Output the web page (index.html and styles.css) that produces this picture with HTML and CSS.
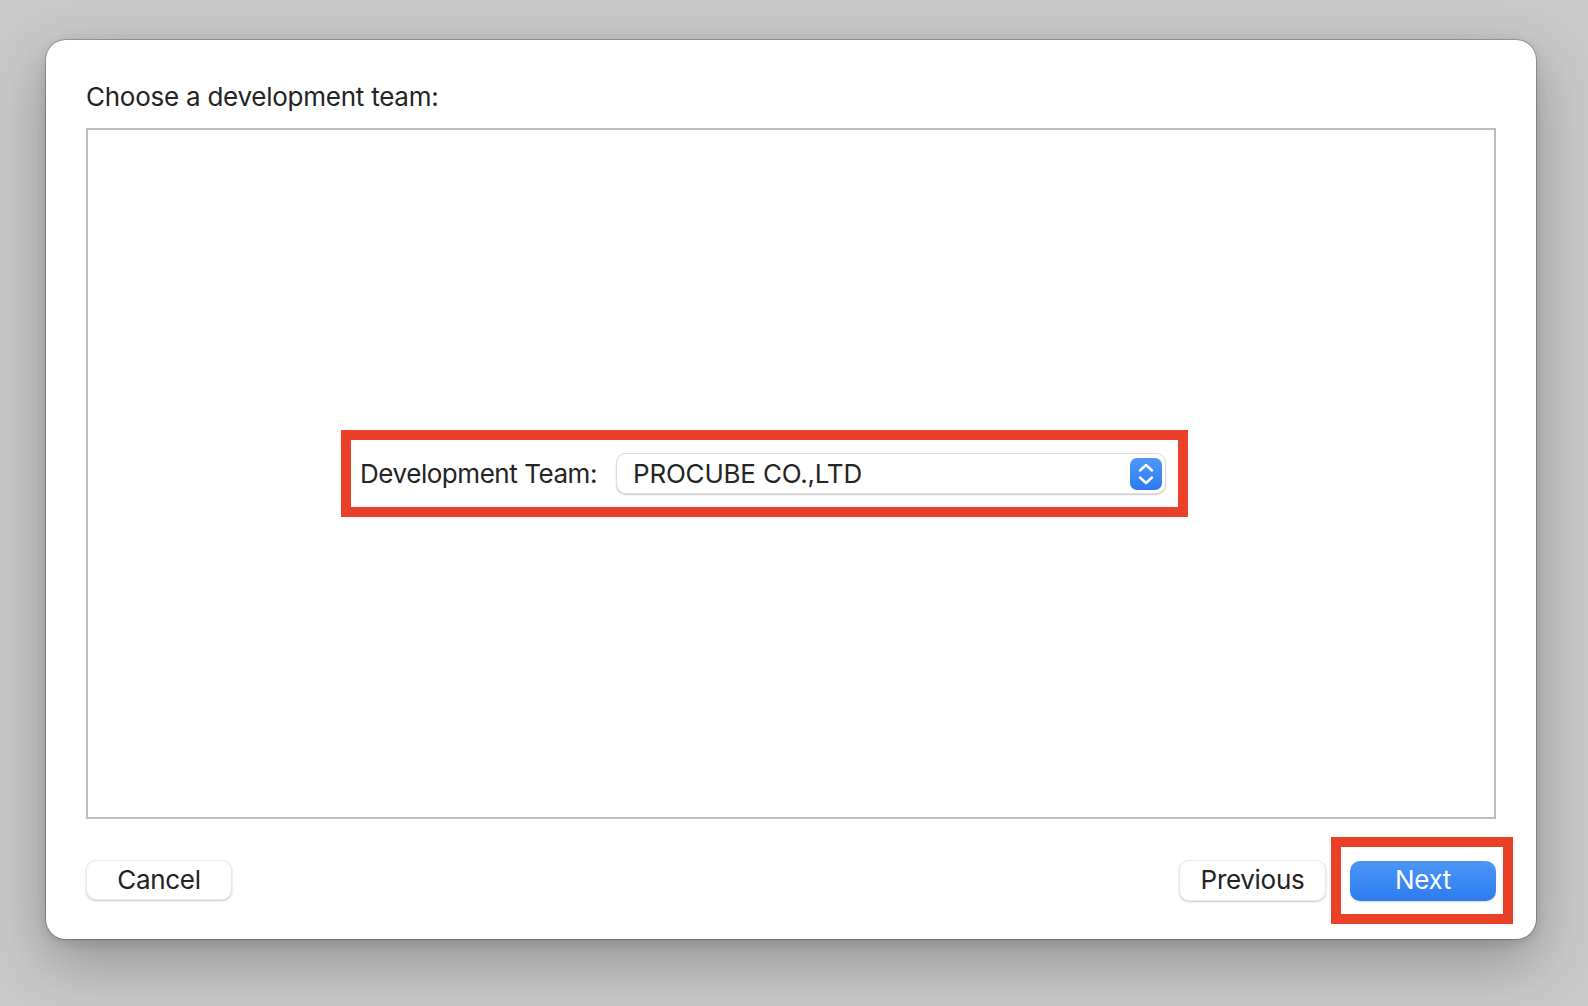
FILE: index.html
```html
<!DOCTYPE html>
<html lang="en">
<head>
<meta charset="utf-8">
<title>Choose a development team</title>
<link rel="stylesheet" href="styles.css">
</head>
<body>
<div class="dialog">
  <div class="title">Choose a development team:</div>
  <div class="content-box">
    <div class="highlight team-row">
      <span class="label">Development Team:</span>
      <div class="popup">
        <span class="popup-value">PROCUBE CO.,LTD</span>
        <svg class="stepper" width="32" height="32" viewBox="0 0 32 32">
          <defs>
            <linearGradient id="sg" x1="0" y1="0" x2="0" y2="1">
              <stop offset="0" stop-color="#4f98f8"/>
              <stop offset="1" stop-color="#2c7af0"/>
            </linearGradient>
          </defs>
          <rect x="0" y="0" width="32" height="32" rx="7" fill="url(#sg)"/>
          <polyline points="10,12.5 16,7 22,12.5" fill="none" stroke="#fff" stroke-width="2.4" stroke-linecap="round" stroke-linejoin="round"/>
          <polyline points="10,19.5 16,25 22,19.5" fill="none" stroke="#fff" stroke-width="2.4" stroke-linecap="round" stroke-linejoin="round"/>
        </svg>
      </div>
    </div>
  </div>
  <div class="buttons">
    <button class="btn">Cancel</button>
    <div class="spacer"></div>
    <button class="btn btn-prev">Previous</button>
    <div class="highlight next-wrap">
      <button class="btn btn-primary">Next</button>
    </div>
  </div>
</div>
</body>
</html>
```
FILE: styles.css
```css
html, body {
  margin: 0;
  padding: 0;
}
body {
  width: 1588px;
  height: 1006px;
  background: #c9c9c9;
  font-family: Inter, "Noto Sans", "Liberation Sans", sans-serif;
  color: #242424;
  padding: 40px 52px 0 46px;
  box-sizing: border-box;
  overflow: hidden;
}
.dialog {
  width: 1490px;
  height: 899px;
  box-sizing: border-box;
  background: #ffffff;
  border-radius: 20px;
  box-shadow: 0 0 0 1px rgba(0,0,0,0.22), 0 22px 60px rgba(0,0,0,0.28), 0 4px 12px rgba(0,0,0,0.12);
  padding: 41px 40px 39px 40px;
  display: flex;
  flex-direction: column;
}
.title {
  font-size: 26px;
  line-height: 32px;
  height: 32px;
  letter-spacing: -0.25px;
}
.content-box {
  margin-top: 15px;
  height: 691px;
  box-sizing: border-box;
  border: 2px solid #bdbdbd;
  display: flex;
  align-items: center;
  padding-left: 253px;
}
.highlight {
  border: 10px solid #ea4027;
  box-sizing: border-box;
  display: flex;
  align-items: center;
}
.team-row {
  width: 847px;
  height: 87px;
  padding: 0 12px 0 9px;
}
.label {
  font-size: 26px;
  line-height: 32px;
  letter-spacing: -0.45px;
  white-space: nowrap;
}
.popup {
  margin-left: auto;
  width: 550px;
  height: 41px;
  box-sizing: border-box;
  border-radius: 10px;
  background: #fff;
  border: 1px solid #dedede;
  box-shadow: 0 1px 1.5px rgba(0,0,0,0.22);
  display: flex;
  align-items: center;
  padding: 0 3px 0 16px;
}
.popup-value {
  font-size: 26px;
  line-height: 32px;
  letter-spacing: -0.2px;
  flex: 1;
  white-space: nowrap;
}
.stepper {
  display: block;
  flex: none;
}
.buttons {
  margin-top: 41px;
  height: 40px;
  display: flex;
  align-items: center;
}
.spacer {
  flex: 1;
}
.btn {
  font-family: inherit;
  font-size: 26px;
  letter-spacing: -0.3px;
  color: #222;
  background: #fff;
  border: 1px solid rgba(0,0,0,0.08);
  border-radius: 10px;
  box-shadow: 0 1px 2px rgba(0,0,0,0.22);
  height: 40px;
  width: 146px;
  padding: 0 0 2px 0;
  display: flex;
  align-items: center;
  justify-content: center;
}
.btn-prev {
  width: 147px;
  height: 41px;
}
.next-wrap {
  margin-left: 5px;
  margin-right: -17px;
  width: 182px;
  height: 87px;
  padding: 1px 7px 0 9px;
  flex: none;
}
.btn-primary {
  color: #fff;
  border: none;
  background: linear-gradient(#4b97f8, #2d7bf0);
  box-shadow: 0 1px 1.5px rgba(0,0,0,0.15);
}
```
